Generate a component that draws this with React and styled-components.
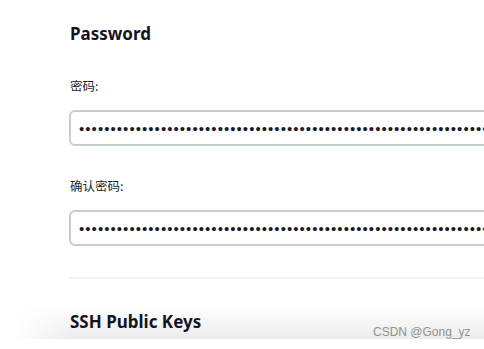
import React from "react";
import styled, { createGlobalStyle } from "styled-components";

const GlobalStyle = createGlobalStyle`
  html, body {
    margin: 0;
    padding: 0;
    background: #ffffff;
    overflow: hidden;
  }
  body {
    font-family: "Noto Sans", "Noto Sans CJK SC", sans-serif;
    color: #14141f;
  }
`;

const Page = styled.div`
  position: relative;
  width: 484px;
  height: 349px;
  overflow: hidden;
  background: #ffffff;
`;

const Content = styled.div`
  position: relative;
  z-index: 1;
  padding: 24px 0 0 69px;
  display: flex;
  flex-direction: column;
`;

const SectionTitle = styled.h2`
  margin: 0 0 0 1px;
  font-family: "Noto Sans", sans-serif;
  font-size: 17px;
  font-weight: 700;
  line-height: 20px;
  color: #14141f;
  margin-top: ${(p) => p.$top || 0}px;
`;

const Field = styled.div`
  display: flex;
  flex-direction: column;
  margin-top: ${(p) => p.$top}px;
`;

const Label = styled.label`
  margin: 0 0 15px 1px;
  font-family: "Noto Sans CJK SC", "Noto Sans", sans-serif;
  font-size: 12.5px;
  line-height: 18px;
  color: #1f1f2a;
`;

const PasswordInput = styled.input`
  box-sizing: border-box;
  width: 640px;
  height: 36px;
  margin: 0;
  padding: 0 8px;
  border: 2px solid #c4cdd1;
  border-radius: 6px;
  background: #ffffff;
  font-family: "Liberation Sans", sans-serif;
  font-size: 15px;
  letter-spacing: 1.05px;
  color: #1b1b26;
  outline: none;
`;

const Divider = styled.hr`
  width: 640px;
  height: 2px;
  margin: 31px 0 0 0;
  border: 0;
  background: #f0f1f4;
`;

const BottomShade = styled.div`
  position: absolute;
  left: 0;
  right: 0;
  top: 305px;
  height: 34px;
  z-index: 0;
  background: linear-gradient(to bottom, rgba(0, 0, 0, 0), rgba(0, 0, 0, 0.075));
  -webkit-mask-image: linear-gradient(to right, transparent 15px, #000 70px);
  mask-image: linear-gradient(to right, transparent 15px, #000 70px);
`;

const Watermark = styled.div`
  position: absolute;
  left: 373px;
  top: 325px;
  z-index: 2;
  font-family: "Liberation Sans", sans-serif;
  font-size: 12px;
  line-height: 14px;
  color: #919191;
  white-space: nowrap;
`;

const secret = "x".repeat(90);

export default function App() {
  return (
    <Page>
      <GlobalStyle />
      <Content>
        <SectionTitle>Password</SectionTitle>
        <Field $top={33}>
          <Label>密码:</Label>
          <PasswordInput type="password" value={secret} readOnly />
        </Field>
        <Field $top={31}>
          <Label>确认密码:</Label>
          <PasswordInput type="password" value={secret} readOnly />
        </Field>
        <Divider />
        <SectionTitle $top={33}>SSH Public Keys</SectionTitle>
      </Content>
      <BottomShade />
      <Watermark>CSDN @Gong_yz</Watermark>
    </Page>
  );
}
